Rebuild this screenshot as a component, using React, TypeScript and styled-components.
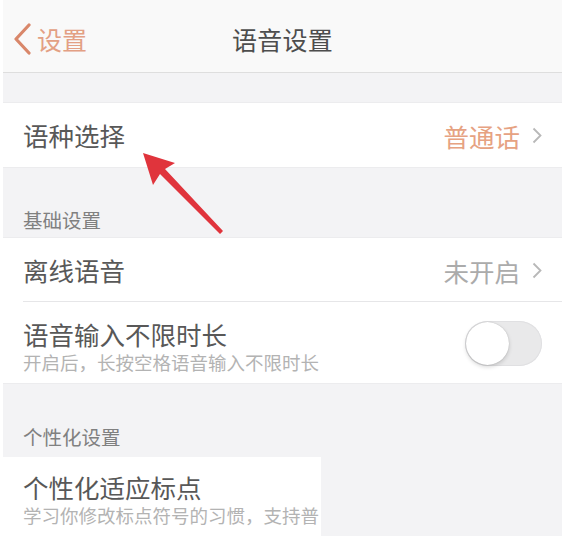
import React from 'react';
import styled, { createGlobalStyle } from 'styled-components';

const GlobalStyle = createGlobalStyle`
  html, body {
    margin: 0;
    padding: 0;
    background: #ffffff;
  }
  body {
    font-family: "Noto Sans CJK SC", "Noto Sans", sans-serif;
  }
`;

const Page = styled.div`
  position: relative;
  width: 567px;
  height: 543px;
  overflow: hidden;
  background: #ffffff;
`;

const Screen = styled.div`
  margin-left: 3px;
  width: 559px;
  height: 536px;
  background: #f3f3f5;
  display: flex;
  flex-direction: column;
  overflow: hidden;
`;

const NavBar = styled.div`
  height: 73px;
  flex-shrink: 0;
  background: #f9f9f9;
  border-bottom: 1px solid #dedede;
  display: grid;
  grid-template-columns: 1fr auto 1fr;
  align-items: center;
  padding-top: 6px;
  box-sizing: border-box;
`;

const BackButton = styled.div`
  display: flex;
  align-items: center;
  gap: 5px;
  padding-left: 9px;
  color: #e3a084;
  font-size: 25px;
`;

const NavTitle = styled.div`
  font-size: 25px;
  color: #4d4d4d;
  letter-spacing: 0.3px;
`;

const Spacer = styled.div<{ $h: number }>`
  height: ${(p) => p.$h}px;
  flex-shrink: 0;
`;

const Group = styled.div`
  background: #ffffff;
  border-top: 1px solid #ececee;
  border-bottom: 1px solid #ececee;
  flex-shrink: 0;
`;

const Row = styled.div<{ $h: number; $divider?: boolean }>`
  height: ${(p) => p.$h}px;
  box-sizing: border-box;
  display: flex;
  align-items: center;
  justify-content: space-between;
  padding: 0 20px;
  position: relative;

  ${(p) =>
    p.$divider &&
    `
    &::after {
      content: '';
      position: absolute;
      left: 20px;
      right: 0;
      bottom: 0;
      height: 1px;
      background: #e6e6e8;
    }
  `}
`;

const TextBlock = styled.div`
  display: flex;
  flex-direction: column;
  min-width: 0;
  margin-top: 6px;
`;

const Title = styled.div`
  font-size: 25.5px;
  line-height: 32px;
  color: #585858;
  white-space: nowrap;
`;

const Subtitle = styled.div`
  font-size: 18.5px;
  line-height: 24px;
  color: #b3b3b3;
  white-space: nowrap;
`;

const Value = styled.div<{ $accent?: boolean }>`
  display: flex;
  align-items: center;
  gap: 12px;
  font-size: 25.5px;
  color: ${(p) => (p.$accent ? '#e6a282' : '#ababab')};
`;

const SectionHeader = styled.div<{ $h: number; $pb: number }>`
  height: ${(p) => p.$h}px;
  flex-shrink: 0;
  box-sizing: border-box;
  display: flex;
  align-items: flex-end;
  padding: 0 20px ${(p) => p.$pb}px;
  font-size: 19.5px;
  line-height: 26px;
  color: #808080;
`;

const Toggle = styled.div`
  position: relative;
  width: 77px;
  height: 45px;
  border-radius: 23px;
  background: #e9e9ea;
  box-shadow: inset 0 0 0 1px #e0e0e2;
  flex-shrink: 0;
  margin-top: 2px;
`;

const Knob = styled.div`
  position: absolute;
  top: 1px;
  left: 1px;
  width: 43px;
  height: 43px;
  border-radius: 50%;
  background: #ffffff;
  box-shadow: 0 2px 4px rgba(0, 0, 0, 0.16), 0 0 1px rgba(0, 0, 0, 0.25);
`;

const BottomRow = styled.div`
  display: flex;
  flex: 1;
`;

const PartialCard = styled.div`
  width: 318px;
  background: #ffffff;
  overflow: hidden;
  padding: 14px 0 0 20px;
  box-sizing: border-box;
`;

const Arrow = styled.svg`
  position: absolute;
  left: 0;
  top: 0;
  pointer-events: none;
`;

const Chevron: React.FC = () => (
  <svg width="10" height="17" viewBox="0 0 10 17">
    <polyline points="1.5,1.5 8.5,8.5 1.5,15.5" fill="none" stroke="#b8b8b8" strokeWidth="1.8" />
  </svg>
);

const BackChevron: React.FC = () => (
  <svg width="20" height="32" viewBox="0 0 20 32">
    <polyline points="17,2 4,16 17,30" fill="none" stroke="#d9876a" strokeWidth="3.2" strokeLinejoin="round" strokeLinecap="round" />
  </svg>
);

const App: React.FC = () => {
  return (
    <Page>
      <GlobalStyle />
      <Screen>
        <NavBar>
          <BackButton>
            <BackChevron />
            <span>设置</span>
          </BackButton>
          <NavTitle>语音设置</NavTitle>
          <div />
        </NavBar>

        <Spacer $h={29} />

        <Group>
          <Row $h={64}>
            <Title>语种选择</Title>
            <Value $accent>
              普通话
              <Chevron />
            </Value>
          </Row>
        </Group>

        <SectionHeader $h={69} $pb={4}>基础设置</SectionHeader>

        <Group>
          <Row $h={64} $divider>
            <Title>离线语音</Title>
            <Value>
              未开启
              <Chevron />
            </Value>
          </Row>
          <Row $h={81}>
            <TextBlock>
              <Title>语音输入不限时长</Title>
              <Subtitle>开启后，长按空格语音输入不限时长</Subtitle>
            </TextBlock>
            <Toggle>
              <Knob />
            </Toggle>
          </Row>
        </Group>

        <SectionHeader $h={73} $pb={7}>个性化设置</SectionHeader>

        <BottomRow>
          <PartialCard>
            <Title>个性化适应标点</Title>
            <Subtitle>学习你修改标点符号的习惯，支持普</Subtitle>
          </PartialCard>
        </BottomRow>
      </Screen>

      <Arrow width="567" height="543" viewBox="0 0 567 543">
        <polygon points="143,153 175,163 165,169 223,231 220,234 160,174 153,185" fill="#e0343c" />
      </Arrow>
    </Page>
  );
};

export default App;
